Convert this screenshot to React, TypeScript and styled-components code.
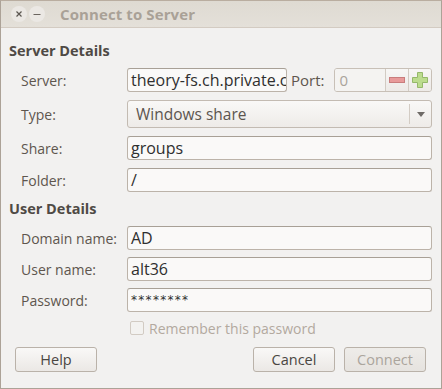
import type { FC } from "react";
import styled, { createGlobalStyle, css } from "styled-components";

const Global = createGlobalStyle`
  html, body { margin: 0; padding: 0; background: #f2f1f0; }
  body { font-family: "Open Sans", "DejaVu Sans", sans-serif; }
  * { box-sizing: border-box; }
`;

const Window = styled.div`
  width: 442px;
  height: 389px;
  display: flex;
  flex-direction: column;
  background: #f2f1f0;
  border: 1px solid #aca297;
  border-top-color: #b9ada0;
`;

const TitleBar = styled.div`
  height: 27px;
  display: flex;
  align-items: center;
  gap: 2px;
  padding-left: 10px;
  background: linear-gradient(#dedad2, #e4e0d9);
  border-bottom: 1px solid #d3cbc2;
`;

const WinButton = styled.div`
  width: 16px;
  height: 16px;
  border-radius: 50%;
  background: #ebe8e4;
  display: flex;
  align-items: center;
  justify-content: center;
`;

const Title = styled.div`
  margin-left: 13px;
  font-weight: 700;
  font-size: 15px;
  color: #a9a197;
  letter-spacing: 0.1px;
`;

const Body = styled.div`
  flex: 1;
  display: flex;
  flex-direction: column;
  padding: 14px 9px 0 8px;
`;

const Heading = styled.div<{ $mt?: number }>`
  height: 18px;
  line-height: 18px;
  font-size: 14.5px;
  font-weight: 700;
  color: #4f4a45;
  margin-top: ${(p) => p.$mt ?? 0}px;
`;

const Section = styled.div<{ $gap: number }>`
  display: grid;
  grid-template-columns: 106px 1fr;
  row-gap: ${(p) => p.$gap}px;
  padding-left: 12px;
  margin-top: 8px;
`;

const Label = styled.div`
  display: flex;
  align-items: center;
  font-size: 14px;
  color: #5e564e;
`;

const fieldBox = css`
  height: 24px;
  border: 1px solid #bcb3a9;
  border-top-color: #a8a096;
  border-radius: 3px;
  background: #faf9f8;
  display: flex;
  align-items: center;
  padding: 0 3px;
  font-size: 16px;
  color: #2f2f2f;
  white-space: nowrap;
  overflow: hidden;
`;

const Entry = styled.div<{ $w?: number }>`
  ${fieldBox};
  ${(p) => (p.$w ? `width: ${p.$w}px; flex: none;` : "")}
`;

const ServerLine = styled.div`
  display: flex;
  align-items: center;
`;

const PortLabel = styled(Label)`
  margin: 0 10px 0 4px;
  font-size: 15px;
`;

const Spin = styled.div`
  flex: 1;
  display: flex;
  height: 24px;
  border: 1px solid #c8c0b7;
  border-radius: 3px;
  overflow: hidden;
`;

const SpinText = styled.div`
  flex: 1;
  display: flex;
  align-items: center;
  padding-left: 4px;
  font-size: 15px;
  color: #aaa49b;
  background: #f4f3f1;
`;

const SpinButton = styled.div`
  width: 23px;
  display: flex;
  align-items: center;
  justify-content: center;
  border-left: 1px solid #d2cbc3;
  background: linear-gradient(#f7f6f5, #edeae7);
`;

const Combo = styled.div`
  height: 28px;
  border: 1px solid #c3bbb2;
  border-radius: 3px;
  background: linear-gradient(#f9f8f7, #eeebe8);
  display: flex;
  align-items: center;
  font-size: 15.5px;
  color: #5c554f;
`;

const ComboText = styled.div`
  flex: 1;
  padding-left: 8px;
`;

const ComboArrow = styled.div`
  width: 22px;
  height: 20px;
  border-left: 1px solid #d3ccc4;
  display: flex;
  align-items: center;
  justify-content: center;
`;

const Dots = styled.span`
  font-size: 12px;
  letter-spacing: 1.3px;
  font-family: "DejaVu Sans", sans-serif;
`;

const CheckRow = styled.label`
  display: flex;
  align-items: center;
  gap: 5px;
  margin: 8px 0 0 121px;
  height: 16px;
  font-size: 14px;
  color: #b3a99f;
`;

const CheckBox = styled.span`
  width: 14px;
  height: 14px;
  border: 1px solid #d2cbc3;
  border-radius: 2px;
  background: #f3f2f0;
`;

const Buttons = styled.div`
  display: flex;
  align-items: center;
  gap: 9px;
  margin-top: 11px;
  padding: 0 6px;
`;

const Spacer = styled.div`
  flex: 1;
`;

const Button = styled.div<{ $disabled?: boolean }>`
  width: 82px;
  height: 25px;
  border: 1px solid #bab2a9;
  border-radius: 3px;
  background: ${(p) =>
    p.$disabled ? "linear-gradient(#eeece9, #e6e3df)" : "linear-gradient(#f9f8f7, #ebe8e5)"};
  display: flex;
  align-items: center;
  justify-content: center;
  font-size: 14.5px;
  color: ${(p) => (p.$disabled ? "#aba59d" : "#4a4642")};
`;

const App: FC = () => (
  <>
    <Global />
    <Window>
      <TitleBar>
        <WinButton>
          <svg width="8" height="8" viewBox="0 0 8 8">
            <path d="M1.5 1.5l5 5M6.5 1.5l-5 5" stroke="#5b5650" strokeWidth="1.2" />
          </svg>
        </WinButton>
        <WinButton>
          <svg width="8" height="8" viewBox="0 0 8 8">
            <path d="M0.5 4.5h7" stroke="#6b655f" strokeWidth="1" />
          </svg>
        </WinButton>
        <Title>Connect to Server</Title>
      </TitleBar>
      <Body>
        <Heading>Server Details</Heading>
        <Section $gap={8}>
          <Label>Server:</Label>
          <ServerLine>
            <Entry $w={160}>theory-fs.ch.private.c</Entry>
            <PortLabel>Port:</PortLabel>
            <Spin>
              <SpinText>0</SpinText>
              <SpinButton>
                <svg width="16" height="8" viewBox="0 0 16 8">
                  <rect x="0.5" y="1.5" width="15" height="5" fill="#e89a9a" stroke="#c97d7d" />
                </svg>
              </SpinButton>
              <SpinButton>
                <svg width="16" height="16" viewBox="0 0 16 16">
                  <path
                    d="M5.5 0.5h5v5h5v5h-5v5h-5v-5h-5v-5h5z"
                    fill="#bcdc8e"
                    stroke="#95b86a"
                  />
                </svg>
              </SpinButton>
            </Spin>
          </ServerLine>
          <Label>Type:</Label>
          <Combo>
            <ComboText>Windows share</ComboText>
            <ComboArrow>
              <svg width="8" height="5" viewBox="0 0 8 5">
                <path d="M0 0h8l-4 5z" fill="#6f6b67" />
              </svg>
            </ComboArrow>
          </Combo>
          <Label>Share:</Label>
          <Entry>groups</Entry>
          <Label>Folder:</Label>
          <Entry>/</Entry>
        </Section>
        <Heading $mt={8}>User Details</Heading>
        <Section $gap={7}>
          <Label>Domain name:</Label>
          <Entry>AD</Entry>
          <Label>User name:</Label>
          <Entry>alt36</Entry>
          <Label>Password:</Label>
          <Entry>
            <Dots>********</Dots>
          </Entry>
        </Section>
        <CheckRow>
          <CheckBox />
          Remember this password
        </CheckRow>
        <Buttons>
          <Button>Help</Button>
          <Spacer />
          <Button>Cancel</Button>
          <Button $disabled>Connect</Button>
        </Buttons>
      </Body>
    </Window>
  </>
);

export default App;
